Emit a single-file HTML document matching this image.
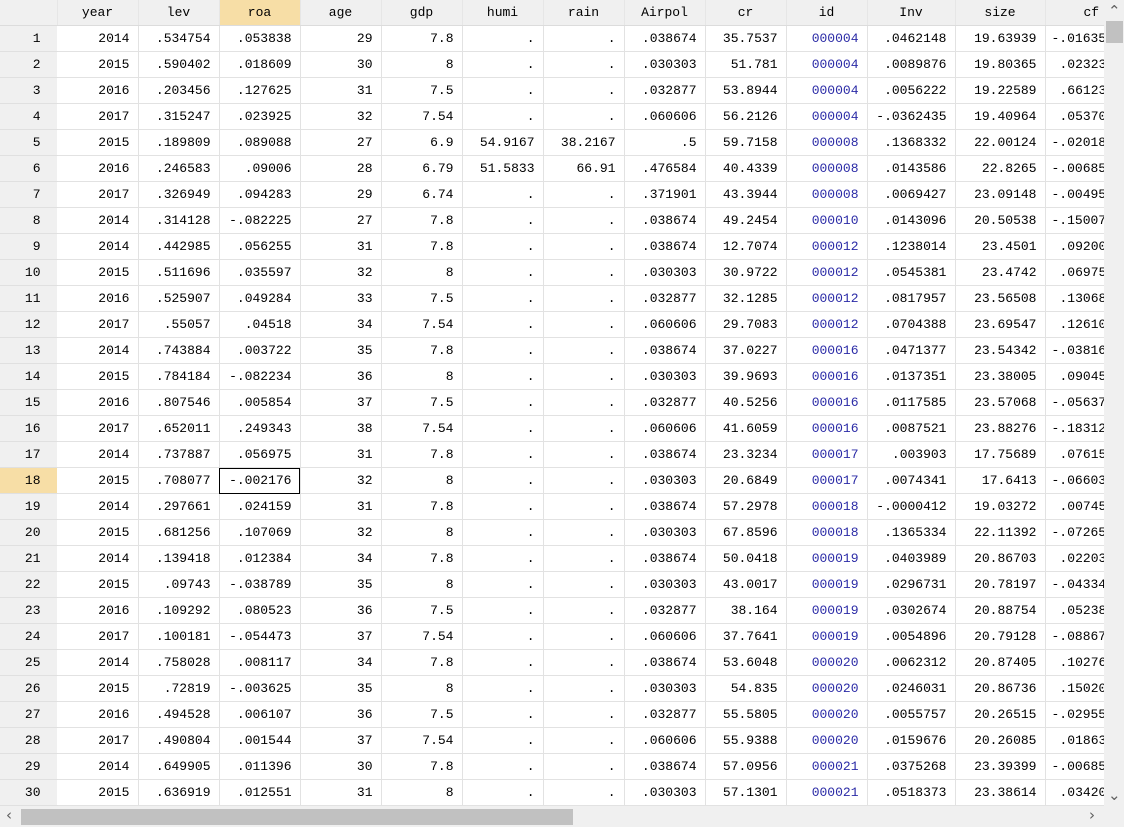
<!DOCTYPE html><html><head><style>
body{margin:0;width:1124px;height:827px;overflow:hidden;background:#fff;font-family:"Liberation Mono","Courier New",monospace;font-size:13px;color:#000;position:relative}
table{border-collapse:collapse;table-layout:fixed;position:absolute;left:0;top:0;width:1163px}
td,th{height:25px;border-right:1px solid #e2e2e2;border-bottom:1px solid #e2e2e2;padding:0 8px 0 0;text-align:right;white-space:nowrap;overflow:hidden;font-weight:normal}
th{background:#f0f0f0;text-align:center;padding:0;border-color:#fff #e6e6e6 #dcdcdc #fff}
td.n{background:#f0f0f0;padding-right:16px;border-right-color:#fff;border-bottom-color:#e0e0e0}
td.h,th.h{background:#f7dea6}
td.b{color:#2a2aa6}
td.s{outline:1px solid #000;outline-offset:-1px}
.vs{position:absolute;left:1104px;top:0;width:20px;height:806px;background:#f0f0f0}
.hs{position:absolute;left:0;top:806px;width:1124px;height:21px;background:#f0f0f0}
.th{position:absolute;left:21px;top:809px;width:552px;height:16px;background:#c1c1c1}
.vt{position:absolute;left:1106px;top:21px;width:17px;height:22px;background:#c1c1c1}
.ar{position:absolute;color:#606060;font-family:"DejaVu Sans",sans-serif;font-size:15px}
</style></head><body>
<table>
<colgroup><col style="width:57px"><col style="width:81px"><col style="width:81px"><col style="width:81px"><col style="width:81px"><col style="width:81px"><col style="width:81px"><col style="width:81px"><col style="width:81px"><col style="width:81px"><col style="width:81px"><col style="width:88px"><col style="width:90px"><col style="width:118px"></colgroup>
<tr><th></th><th>year</th><th>lev</th><th class="h">roa</th><th>age</th><th>gdp</th><th>humi</th><th>rain</th><th>Airpol</th><th>cr</th><th>id</th><th>Inv</th><th>size</th><th style="text-align:left;padding-left:38px">cf</th></tr>
<tbody id="b"></tbody>
</table>
<div class="vs"></div><div class="vt"></div>
<div class="hs"></div><div class="th"></div>
<div class="ar" style="left:1108px;top:2px">&#8963;</div>
<div class="ar" style="left:1108px;top:786px">&#8964;</div>
<div class="ar" style="left:6px;top:806px">&#8249;</div>
<div class="ar" style="left:1089px;top:806px">&#8250;</div>
<script>
var d=`2014 .534754 .053838 29 7.8 . . .038674 35.7537 000004 .0462148 19.63939 -.01635
2015 .590402 .018609 30 8 . . .030303 51.781 000004 .0089876 19.80365 .02323
2016 .203456 .127625 31 7.5 . . .032877 53.8944 000004 .0056222 19.22589 .66123
2017 .315247 .023925 32 7.54 . . .060606 56.2126 000004 -.0362435 19.40964 .05370
2015 .189809 .089088 27 6.9 54.9167 38.2167 .5 59.7158 000008 .1368332 22.00124 -.02018
2016 .246583 .09006 28 6.79 51.5833 66.91 .476584 40.4339 000008 .0143586 22.8265 -.00685
2017 .326949 .094283 29 6.74 . . .371901 43.3944 000008 .0069427 23.09148 -.00495
2014 .314128 -.082225 27 7.8 . . .038674 49.2454 000010 .0143096 20.50538 -.15007
2014 .442985 .056255 31 7.8 . . .038674 12.7074 000012 .1238014 23.4501 .09200
2015 .511696 .035597 32 8 . . .030303 30.9722 000012 .0545381 23.4742 .06975
2016 .525907 .049284 33 7.5 . . .032877 32.1285 000012 .0817957 23.56508 .13068
2017 .55057 .04518 34 7.54 . . .060606 29.7083 000012 .0704388 23.69547 .12610
2014 .743884 .003722 35 7.8 . . .038674 37.0227 000016 .0471377 23.54342 -.03816
2015 .784184 -.082234 36 8 . . .030303 39.9693 000016 .0137351 23.38005 .09045
2016 .807546 .005854 37 7.5 . . .032877 40.5256 000016 .0117585 23.57068 -.05637
2017 .652011 .249343 38 7.54 . . .060606 41.6059 000016 .0087521 23.88276 -.18312
2014 .737887 .056975 31 7.8 . . .038674 23.3234 000017 .003903 17.75689 .07615
2015 .708077 -.002176 32 8 . . .030303 20.6849 000017 .0074341 17.6413 -.06603
2014 .297661 .024159 31 7.8 . . .038674 57.2978 000018 -.0000412 19.03272 .00745
2015 .681256 .107069 32 8 . . .030303 67.8596 000018 .1365334 22.11392 -.07265
2014 .139418 .012384 34 7.8 . . .038674 50.0418 000019 .0403989 20.86703 .02203
2015 .09743 -.038789 35 8 . . .030303 43.0017 000019 .0296731 20.78197 -.04334
2016 .109292 .080523 36 7.5 . . .032877 38.164 000019 .0302674 20.88754 .05238
2017 .100181 -.054473 37 7.54 . . .060606 37.7641 000019 .0054896 20.79128 -.08867
2014 .758028 .008117 34 7.8 . . .038674 53.6048 000020 .0062312 20.87405 .10276
2015 .72819 -.003625 35 8 . . .030303 54.835 000020 .0246031 20.86736 .15020
2016 .494528 .006107 36 7.5 . . .032877 55.5805 000020 .0055757 20.26515 -.02955
2017 .490804 .001544 37 7.54 . . .060606 55.9388 000020 .0159676 20.26085 .01863
2014 .649905 .011396 30 7.8 . . .038674 57.0956 000021 .0375268 23.39399 -.00685
2015 .636919 .012551 31 8 . . .030303 57.1301 000021 .0518373 23.38614 .03420`.split('\n');
var h='';d.forEach(function(l,i){var c=l.split(' ');var r=i+1;
h+='<tr><td class="n'+(r==18?' h':'')+'">'+r+'</td>';
c.forEach(function(v,j){var cl=j==9?'b':(j==2&&r==18?'s':'');
if(j==12){h+='<td style="text-align:left;padding-left:'+(v[0]=='-'?6:14)+'px">'+v+'</td>';}
else h+='<td class="'+cl+'">'+v+'</td>';});h+='</tr>';});
document.getElementById('b').innerHTML=h;
</script>
</body></html>
